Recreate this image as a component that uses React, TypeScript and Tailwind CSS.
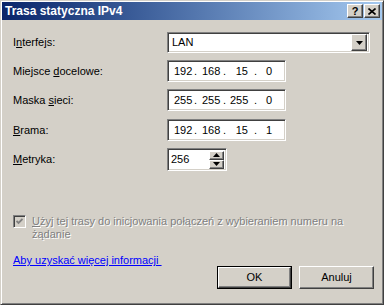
import React from 'react';

const sunken =
  'border border-t-[#808080] border-l-[#808080] border-r-white border-b-white shadow-[inset_1px_1px_0_#404040,inset_-1px_-1px_0_#d4d0c8]';
const raised =
  'border border-t-white border-l-white border-r-[#404040] border-b-[#404040] shadow-[inset_-1px_-1px_0_#808080] bg-[#d4d0c8]';

const IpField: React.FC<{ parts: string[] }> = ({ parts }) => (
  <div className={`flex h-[22px] w-[119px] items-center bg-white ${sunken}`}>
    <span className="ml-[6px] w-[18px] text-right">{parts[0]}</span>
    <span className="w-[10px] pl-[2px]">.</span>
    <span className="w-[18px] text-right">{parts[1]}</span>
    <span className="w-[10px] pl-[3px]">.</span>
    <span className="w-[18px] text-right">{parts[2]}</span>
    <span className="w-[12px] pl-[6px]">.</span>
    <span className="w-[12px] text-right">{parts[3]}</span>
  </div>
);

const Row: React.FC<{ label: React.ReactNode; mt: string; children: React.ReactNode }> = ({ label, mt, children }) => (
  <div className={`flex items-center ${mt}`}>
    <div className="w-[154px] shrink-0">{label}</div>
    <div className="flex flex-1">{children}</div>
  </div>
);

const Arrow: React.FC<{ up?: boolean }> = ({ up }) => (
  <svg width="7" height="4" viewBox="0 0 7 4" className={up ? 'rotate-180' : ''}>
    <path d="M0 0h7L3.5 4z" fill="#000" />
  </svg>
);

export default function App() {
  return (
    <div className="h-[305px] w-[384px] bg-[#d4d0c8] font-['Liberation_Sans',Arial,sans-serif] text-[11px] leading-[13px] text-black">
      <div className="flex h-full w-full flex-col border border-t-[#d4d0c8] border-l-[#d4d0c8] border-r-[#404040] border-b-[#404040] p-[1px] shadow-[inset_1px_1px_0_#ffffff,inset_-1px_-1px_0_#808080]">
        <div className="flex h-[18px] items-center bg-linear-to-r from-[#0a246a] to-[#a6caf0] pl-[3px] pr-[2px]">
          <span className="text-[12px] font-bold text-white">Trasa statyczna IPv4</span>
          <div className="ml-auto flex gap-[1px]">
            <div className={`flex h-[14px] w-[16px] items-center justify-center ${raised}`}>
              <span className="text-[11px] font-bold leading-none">?</span>
            </div>
            <div className={`flex h-[14px] w-[16px] items-center justify-center ${raised}`}>
              <svg width="8" height="7" viewBox="0 0 8 7">
                <path d="M0.5 0.5L7.5 6.5M7.5 0.5L0.5 6.5" stroke="#000" strokeWidth="1.6" />
              </svg>
            </div>
          </div>
        </div>

        <div className="flex flex-1 flex-col pl-[11px] pr-[8px]">
          <Row
            mt="mt-[12px]"
            label={
              <span>
                I<u>n</u>terfejs:
              </span>
            }
          >
            <div className={`flex h-[21px] w-[203px] items-center bg-white ${sunken} p-[2px]`}>
              <span className="pl-[2px]">LAN</span>
              <div className={`ml-auto flex h-[17px] w-[16px] items-center justify-center ${raised}`}>
                <Arrow />
              </div>
            </div>
          </Row>
          <Row
            mt="mt-[7px]"
            label={
              <span>
                Miejsce <u>d</u>ocelowe:
              </span>
            }
          >
            <IpField parts={['192', '168', '15', '0']} />
          </Row>
          <Row
            mt="mt-[7px]"
            label={
              <span>
                Maska <u>s</u>ieci:
              </span>
            }
          >
            <IpField parts={['255', '255', '255', '0']} />
          </Row>
          <Row
            mt="mt-[8px]"
            label={
              <span>
                <u>B</u>rama:
              </span>
            }
          >
            <IpField parts={['192', '168', '15', '1']} />
          </Row>
          <Row
            mt="mt-[7px]"
            label={
              <span>
                <u>M</u>etryka:
              </span>
            }
          >
            <div className={`flex h-[23px] w-[60px] items-center bg-white ${sunken} p-[2px]`}>
              <span className="pl-[1px]">256</span>
              <div className="ml-auto flex flex-col">
                <div className={`flex h-[9px] w-[15px] items-center justify-center ${raised}`}>
                  <Arrow up />
                </div>
                <div className={`flex h-[9px] w-[15px] items-center justify-center ${raised}`}>
                  <Arrow />
                </div>
              </div>
            </div>
          </Row>

          <div className="mt-[44px] flex gap-[6px]">
            <div className={`flex h-[13px] w-[13px] shrink-0 items-center justify-center bg-[#d4d0c8] ${sunken}`}>
              <svg width="7" height="7" viewBox="0 0 7 7">
                <path d="M0.5 3L2.5 5L6.5 1" stroke="#808080" strokeWidth="1.8" fill="none" />
              </svg>
            </div>
            <div className="whitespace-nowrap text-[#808080] [text-shadow:1px_1px_0_#ffffff]">
              <u>U</u>żyj tej trasy do inicjowania połączeń z wybieraniem numeru na
              <br />
              żądanie
            </div>
          </div>

          <div className="mt-[13px] flex justify-between">
            <a className="self-start text-[#0000ff] underline">Aby uzyskać więcej informacji&nbsp;</a>
            <div className="mt-[12px] flex gap-[7px]">
              <div className="border border-black">
                <div className={`flex h-[21px] w-[73px] items-center justify-center ${raised}`}>OK</div>
              </div>
              <div className={`flex h-[23px] w-[75px] items-center justify-center ${raised}`}>Anuluj</div>
            </div>
          </div>
        </div>
      </div>
    </div>
  );
}
